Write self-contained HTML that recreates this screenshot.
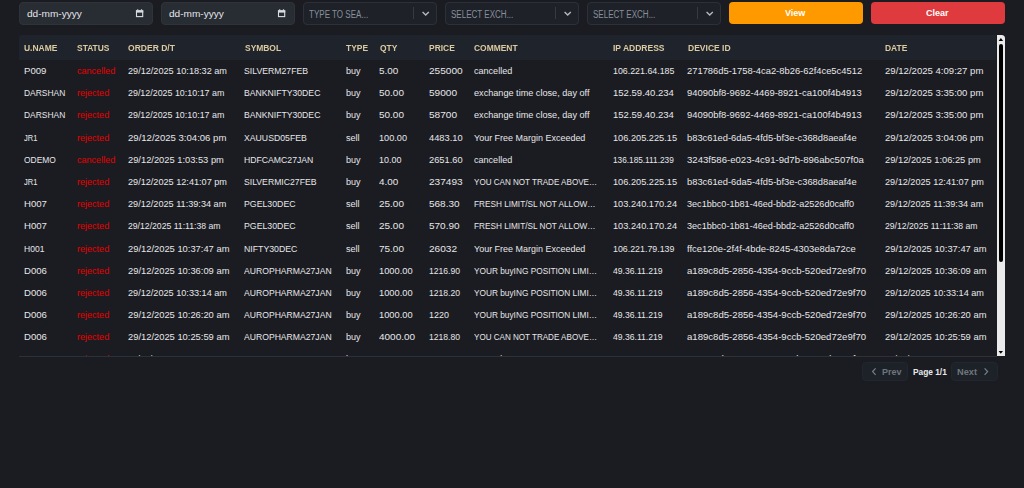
<!DOCTYPE html><html><head><meta charset="utf-8"><style>
html,body{margin:0;padding:0}
body{width:1024px;height:488px;background:#1b1c21;overflow:hidden;position:relative;font-family:"Liberation Sans",sans-serif}
.t{position:absolute;font-size:9.6px;line-height:11px;white-space:nowrap;transform-origin:0 0;color:#e6e7ea}
.ic{position:absolute}
.box{position:absolute;top:2px;height:23.2px;box-sizing:border-box;border-radius:4px}
.date{background:#282c33;border:1px solid #2f333a}
.sel{background:#1e2128;border:1px solid #2b313b}
.dt{color:#e4e6ea;font-size:9.4px}
.ph{color:#87909c;font-size:10px}
.sep{position:absolute;top:7.3px;width:1px;height:12.2px;background:#353b45}
.btn{position:absolute;top:2px;height:21.8px;border-radius:4px}
.bt{color:#fff;font-size:9.4px;font-weight:bold}
.tbl{position:absolute;left:18.5px;top:35px;width:978.5px;height:321.2px;overflow:hidden}
.hdr{position:absolute;left:0;top:0;width:976.6px;height:24.6px;background:#1f232b;border-radius:3px 0 0 0;will-change:transform}
.h{color:#dccaa0;font-weight:bold;font-size:9.8px}
.red{color:#e60000}
.bline{position:absolute;left:18.5px;top:356px;width:978.5px;height:1px;background:#29313c}
.sb{position:absolute;left:997px;top:35px;width:8px;height:321px;background:#ebebeb;border-radius:0 3.5px 0 0}
.thumb{position:absolute;left:1.85px;top:9.3px;width:4.3px;height:217.3px;background:#000;border-radius:2.15px}
.au{position:absolute;left:1.8px;top:3px;width:0;height:0;border-left:2.2px solid transparent;border-right:2.2px solid transparent;border-bottom:3px solid #000}
.ad{position:absolute;left:1.8px;top:316px;width:0;height:0;border-left:2.2px solid transparent;border-right:2.2px solid transparent;border-top:3px solid #000}
.pg{position:absolute;top:361.5px;height:19.5px;box-sizing:border-box;background:#1d2128;border:1px solid #22272f;border-radius:4px}
.pgt{color:#6f757e;font-size:9.3px;font-weight:bold}
.pgw{color:#e8e9ec;font-size:9.3px;font-weight:bold}
</style></head><body><div class="box date" style="left:18.5px;width:134.4px"></div><span class="t dt" style="left:26.50px;top:7.90px;transform:scaleX(1.073);">dd-mm-yyyy</span><svg class="ic" style="left:135.0px;top:8px" width="10" height="11" viewBox="0 0 10 11"><rect x="1.5" y="2.9" width="6.2" height="5.7" fill="none" stroke="#d9dce1" stroke-width="1.1"/><rect x="0.95" y="2.3" width="7.3" height="2.3" fill="#d9dce1"/><rect x="2.1" y="1.3" width="1.2" height="1.2" fill="#d9dce1"/><rect x="5.9" y="1.3" width="1.2" height="1.2" fill="#d9dce1"/></svg><div class="box date" style="left:160.5px;width:134.4px"></div><span class="t dt" style="left:168.50px;top:7.90px;transform:scaleX(1.073);">dd-mm-yyyy</span><svg class="ic" style="left:277.0px;top:8px" width="10" height="11" viewBox="0 0 10 11"><rect x="1.5" y="2.9" width="6.2" height="5.7" fill="none" stroke="#d9dce1" stroke-width="1.1"/><rect x="0.95" y="2.3" width="7.3" height="2.3" fill="#d9dce1"/><rect x="2.1" y="1.3" width="1.2" height="1.2" fill="#d9dce1"/><rect x="5.9" y="1.3" width="1.2" height="1.2" fill="#d9dce1"/></svg><div class="box sel" style="left:302.5px;width:134.4px"></div><span class="t ph" style="left:309.30px;top:9.00px;transform:scaleX(0.804);">TYPE TO SEA...</span><div class="sep" style="left:413.3px"></div><svg class="ic" style="left:420.5px;top:10px" width="10" height="8" viewBox="0 0 10 8"><path d="M1.6 2.0 L4.7 5.1 L7.8 2.0" fill="none" stroke="#b3b8c0" stroke-width="1.4"/></svg><div class="box sel" style="left:444.5px;width:134.4px"></div><span class="t ph" style="left:451.30px;top:9.00px;transform:scaleX(0.803);">SELECT EXCH...</span><div class="sep" style="left:555.3px"></div><svg class="ic" style="left:562.5px;top:10px" width="10" height="8" viewBox="0 0 10 8"><path d="M1.6 2.0 L4.7 5.1 L7.8 2.0" fill="none" stroke="#b3b8c0" stroke-width="1.4"/></svg><div class="box sel" style="left:586.5px;width:134.4px"></div><span class="t ph" style="left:593.30px;top:9.00px;transform:scaleX(0.803);">SELECT EXCH...</span><div class="sep" style="left:697.3px"></div><svg class="ic" style="left:704.5px;top:10px" width="10" height="8" viewBox="0 0 10 8"><path d="M1.6 2.0 L4.7 5.1 L7.8 2.0" fill="none" stroke="#b3b8c0" stroke-width="1.4"/></svg><div class="btn" style="left:728.5px;width:134.4px;background:#ff9900"></div><span class="t bt" style="left:785.30px;top:7.30px;transform:scaleX(0.962);">View</span><div class="btn" style="left:870.5px;width:134.4px;background:#df3b3e"></div><span class="t bt" style="left:926.30px;top:7.30px;transform:scaleX(0.965);">Clear</span><div class="tbl"><div class="hdr"><span class="t h" style="left:5.00px;top:6.70px;transform:scaleX(0.863);">U.NAME</span><span class="t h" style="left:58.00px;top:6.70px;transform:scaleX(0.861);">STATUS</span><span class="t h" style="left:109.00px;top:6.70px;transform:scaleX(0.871);">ORDER D/T</span><span class="t h" style="left:225.50px;top:6.70px;transform:scaleX(0.861);">SYMBOL</span><span class="t h" style="left:327.00px;top:6.70px;transform:scaleX(0.861);">TYPE</span><span class="t h" style="left:360.50px;top:6.70px;transform:scaleX(0.861);">QTY</span><span class="t h" style="left:410.00px;top:6.70px;transform:scaleX(0.861);">PRICE</span><span class="t h" style="left:455.00px;top:6.70px;transform:scaleX(0.861);">COMMENT</span><span class="t h" style="left:594.30px;top:6.70px;transform:scaleX(0.868);">IP ADDRESS</span><span class="t h" style="left:668.50px;top:6.70px;transform:scaleX(0.870);">DEVICE ID</span><span class="t h" style="left:866.00px;top:6.70px;transform:scaleX(0.861);">DATE</span></div><span class="t " style="left:5.00px;top:29.90px;transform:scaleX(1.003);">P009</span><span class="t red" style="left:58.00px;top:29.90px;transform:scaleX(0.943);">cancelled</span><span class="t " style="left:109.00px;top:29.90px;transform:scaleX(0.951);">29/12/2025 10:18:32 am</span><span class="t " style="left:225.50px;top:29.90px;transform:scaleX(0.905);">SILVERM27FEB</span><span class="t " style="left:327.00px;top:29.90px;transform:scaleX(0.943);">buy</span><span class="t " style="left:360.50px;top:29.90px;transform:scaleX(1.033);">5.00</span><span class="t " style="left:410.00px;top:29.90px;transform:scaleX(1.053);">255000</span><span class="t " style="left:455.00px;top:29.90px;transform:scaleX(0.943);">cancelled</span><span class="t " style="left:594.30px;top:29.90px;transform:scaleX(0.921);">106.221.64.185</span><span class="t " style="left:668.50px;top:29.90px;transform:scaleX(0.977);">271786d5-1758-4ca2-8b26-62f4ce5c4512</span><span class="t " style="left:866.00px;top:29.90px;transform:scaleX(0.997);">29/12/2025 4:09:27 pm</span><span class="t " style="left:5.00px;top:52.10px;transform:scaleX(0.879);">DARSHAN</span><span class="t red" style="left:58.00px;top:52.10px;transform:scaleX(0.943);">rejected</span><span class="t " style="left:109.00px;top:52.10px;transform:scaleX(0.926);">29/12/2025 10:10:17 am</span><span class="t " style="left:225.50px;top:52.10px;transform:scaleX(0.901);">BANKNIFTY30DEC</span><span class="t " style="left:327.00px;top:52.10px;transform:scaleX(0.943);">buy</span><span class="t " style="left:360.50px;top:52.10px;transform:scaleX(1.038);">50.00</span><span class="t " style="left:410.00px;top:52.10px;transform:scaleX(1.053);">59000</span><span class="t " style="left:455.00px;top:52.10px;transform:scaleX(0.951);">exchange time close, day off</span><span class="t " style="left:594.30px;top:52.10px;transform:scaleX(0.993);">152.59.40.234</span><span class="t " style="left:668.50px;top:52.10px;transform:scaleX(0.984);">94090bf8-9692-4469-8921-ca100f4b4913</span><span class="t " style="left:866.00px;top:52.10px;transform:scaleX(0.997);">29/12/2025 3:35:00 pm</span><span class="t " style="left:5.00px;top:74.30px;transform:scaleX(0.879);">DARSHAN</span><span class="t red" style="left:58.00px;top:74.30px;transform:scaleX(0.943);">rejected</span><span class="t " style="left:109.00px;top:74.30px;transform:scaleX(0.926);">29/12/2025 10:10:17 am</span><span class="t " style="left:225.50px;top:74.30px;transform:scaleX(0.901);">BANKNIFTY30DEC</span><span class="t " style="left:327.00px;top:74.30px;transform:scaleX(0.943);">buy</span><span class="t " style="left:360.50px;top:74.30px;transform:scaleX(1.038);">50.00</span><span class="t " style="left:410.00px;top:74.30px;transform:scaleX(1.053);">58700</span><span class="t " style="left:455.00px;top:74.30px;transform:scaleX(0.951);">exchange time close, day off</span><span class="t " style="left:594.30px;top:74.30px;transform:scaleX(0.993);">152.59.40.234</span><span class="t " style="left:668.50px;top:74.30px;transform:scaleX(0.984);">94090bf8-9692-4469-8921-ca100f4b4913</span><span class="t " style="left:866.00px;top:74.30px;transform:scaleX(0.997);">29/12/2025 3:35:00 pm</span><span class="t " style="left:5.00px;top:96.50px;transform:scaleX(0.784);">JR1</span><span class="t red" style="left:58.00px;top:96.50px;transform:scaleX(0.943);">rejected</span><span class="t " style="left:109.00px;top:96.50px;transform:scaleX(0.997);">29/12/2025 3:04:06 pm</span><span class="t " style="left:225.50px;top:96.50px;transform:scaleX(0.906);">XAUUSD05FEB</span><span class="t " style="left:327.00px;top:96.50px;transform:scaleX(0.943);">sell</span><span class="t " style="left:360.50px;top:96.50px;transform:scaleX(0.953);">100.00</span><span class="t " style="left:410.00px;top:96.50px;transform:scaleX(0.969);">4483.10</span><span class="t " style="left:455.00px;top:96.50px;transform:scaleX(0.935);">Your Free Margin Exceeded</span><span class="t " style="left:594.30px;top:96.50px;transform:scaleX(0.960);">106.205.225.15</span><span class="t " style="left:668.50px;top:96.50px;transform:scaleX(0.973);">b83c61ed-6da5-4fd5-bf3e-c368d8aeaf4e</span><span class="t " style="left:866.00px;top:96.50px;transform:scaleX(0.997);">29/12/2025 3:04:06 pm</span><span class="t " style="left:5.00px;top:118.70px;transform:scaleX(0.879);">ODEMO</span><span class="t red" style="left:58.00px;top:118.70px;transform:scaleX(0.943);">cancelled</span><span class="t " style="left:109.00px;top:118.70px;transform:scaleX(0.971);">29/12/2025 1:03:53 pm</span><span class="t " style="left:225.50px;top:118.70px;transform:scaleX(0.903);">HDFCAMC27JAN</span><span class="t " style="left:327.00px;top:118.70px;transform:scaleX(0.943);">buy</span><span class="t " style="left:360.50px;top:118.70px;transform:scaleX(0.931);">10.00</span><span class="t " style="left:410.00px;top:118.70px;transform:scaleX(0.969);">2651.60</span><span class="t " style="left:455.00px;top:118.70px;transform:scaleX(0.943);">cancelled</span><span class="t " style="left:594.30px;top:118.70px;transform:scaleX(0.860);">136.185.111.239</span><span class="t " style="left:668.50px;top:118.70px;transform:scaleX(0.999);">3243f586-e023-4c91-9d7b-896abc507f0a</span><span class="t " style="left:866.00px;top:118.70px;transform:scaleX(0.971);">29/12/2025 1:06:25 pm</span><span class="t " style="left:5.00px;top:140.90px;transform:scaleX(0.784);">JR1</span><span class="t red" style="left:58.00px;top:140.90px;transform:scaleX(0.943);">rejected</span><span class="t " style="left:109.00px;top:140.90px;transform:scaleX(0.951);">29/12/2025 12:41:07 pm</span><span class="t " style="left:225.50px;top:140.90px;transform:scaleX(0.902);">SILVERMIC27FEB</span><span class="t " style="left:327.00px;top:140.90px;transform:scaleX(0.943);">buy</span><span class="t " style="left:360.50px;top:140.90px;transform:scaleX(1.033);">4.00</span><span class="t " style="left:410.00px;top:140.90px;transform:scaleX(1.053);">237493</span><span class="t " style="left:455.00px;top:140.90px;transform:scaleX(0.841);">YOU CAN NOT TRADE ABOVE…</span><span class="t " style="left:594.30px;top:140.90px;transform:scaleX(0.960);">106.205.225.15</span><span class="t " style="left:668.50px;top:140.90px;transform:scaleX(0.973);">b83c61ed-6da5-4fd5-bf3e-c368d8aeaf4e</span><span class="t " style="left:866.00px;top:140.90px;transform:scaleX(0.951);">29/12/2025 12:41:07 pm</span><span class="t " style="left:5.00px;top:163.10px;transform:scaleX(1.001);">H007</span><span class="t red" style="left:58.00px;top:163.10px;transform:scaleX(0.943);">rejected</span><span class="t " style="left:109.00px;top:163.10px;transform:scaleX(0.951);">29/12/2025 11:39:34 am</span><span class="t " style="left:225.50px;top:163.10px;transform:scaleX(0.912);">PGEL30DEC</span><span class="t " style="left:327.00px;top:163.10px;transform:scaleX(0.943);">sell</span><span class="t " style="left:360.50px;top:163.10px;transform:scaleX(1.038);">25.00</span><span class="t " style="left:410.00px;top:163.10px;transform:scaleX(1.041);">568.30</span><span class="t " style="left:455.00px;top:163.10px;transform:scaleX(0.857);">FRESH LIMIT/SL NOT ALLOW…</span><span class="t " style="left:594.30px;top:163.10px;transform:scaleX(0.960);">103.240.170.24</span><span class="t " style="left:668.50px;top:163.10px;transform:scaleX(0.947);">3ec1bbc0-1b81-46ed-bbd2-a2526d0caff0</span><span class="t " style="left:866.00px;top:163.10px;transform:scaleX(0.951);">29/12/2025 11:39:34 am</span><span class="t " style="left:5.00px;top:185.30px;transform:scaleX(1.001);">H007</span><span class="t red" style="left:58.00px;top:185.30px;transform:scaleX(0.943);">rejected</span><span class="t " style="left:109.00px;top:185.30px;transform:scaleX(0.901);">29/12/2025 11:11:38 am</span><span class="t " style="left:225.50px;top:185.30px;transform:scaleX(0.912);">PGEL30DEC</span><span class="t " style="left:327.00px;top:185.30px;transform:scaleX(0.943);">sell</span><span class="t " style="left:360.50px;top:185.30px;transform:scaleX(1.038);">25.00</span><span class="t " style="left:410.00px;top:185.30px;transform:scaleX(1.041);">570.90</span><span class="t " style="left:455.00px;top:185.30px;transform:scaleX(0.857);">FRESH LIMIT/SL NOT ALLOW…</span><span class="t " style="left:594.30px;top:185.30px;transform:scaleX(0.960);">103.240.170.24</span><span class="t " style="left:668.50px;top:185.30px;transform:scaleX(0.947);">3ec1bbc0-1b81-46ed-bbd2-a2526d0caff0</span><span class="t " style="left:866.00px;top:185.30px;transform:scaleX(0.901);">29/12/2025 11:11:38 am</span><span class="t " style="left:5.00px;top:207.50px;transform:scaleX(0.889);">H001</span><span class="t red" style="left:58.00px;top:207.50px;transform:scaleX(0.943);">rejected</span><span class="t " style="left:109.00px;top:207.50px;transform:scaleX(0.975);">29/12/2025 10:37:47 am</span><span class="t " style="left:225.50px;top:207.50px;transform:scaleX(0.911);">NIFTY30DEC</span><span class="t " style="left:327.00px;top:207.50px;transform:scaleX(0.943);">sell</span><span class="t " style="left:360.50px;top:207.50px;transform:scaleX(1.038);">75.00</span><span class="t " style="left:410.00px;top:207.50px;transform:scaleX(1.053);">26032</span><span class="t " style="left:455.00px;top:207.50px;transform:scaleX(0.935);">Your Free Margin Exceeded</span><span class="t " style="left:594.30px;top:207.50px;transform:scaleX(0.921);">106.221.79.139</span><span class="t " style="left:668.50px;top:207.50px;transform:scaleX(0.984);">ffce120e-2f4f-4bde-8245-4303e8da72ce</span><span class="t " style="left:866.00px;top:207.50px;transform:scaleX(0.975);">29/12/2025 10:37:47 am</span><span class="t " style="left:5.00px;top:229.70px;transform:scaleX(1.001);">D006</span><span class="t red" style="left:58.00px;top:229.70px;transform:scaleX(0.943);">rejected</span><span class="t " style="left:109.00px;top:229.70px;transform:scaleX(0.975);">29/12/2025 10:36:09 am</span><span class="t " style="left:225.50px;top:229.70px;transform:scaleX(0.898);">AUROPHARMA27JAN</span><span class="t " style="left:327.00px;top:229.70px;transform:scaleX(0.943);">buy</span><span class="t " style="left:360.50px;top:229.70px;transform:scaleX(0.969);">1000.00</span><span class="t " style="left:410.00px;top:229.70px;transform:scaleX(0.895);">1216.90</span><span class="t " style="left:455.00px;top:229.70px;transform:scaleX(0.864);">YOUR buyING POSITION LIMI…</span><span class="t " style="left:594.30px;top:229.70px;transform:scaleX(0.896);">49.36.11.219</span><span class="t " style="left:668.50px;top:229.70px;transform:scaleX(0.999);">a189c8d5-2856-4354-9ccb-520ed72e9f70</span><span class="t " style="left:866.00px;top:229.70px;transform:scaleX(0.975);">29/12/2025 10:36:09 am</span><span class="t " style="left:5.00px;top:251.90px;transform:scaleX(1.001);">D006</span><span class="t red" style="left:58.00px;top:251.90px;transform:scaleX(0.943);">rejected</span><span class="t " style="left:109.00px;top:251.90px;transform:scaleX(0.951);">29/12/2025 10:33:14 am</span><span class="t " style="left:225.50px;top:251.90px;transform:scaleX(0.898);">AUROPHARMA27JAN</span><span class="t " style="left:327.00px;top:251.90px;transform:scaleX(0.943);">buy</span><span class="t " style="left:360.50px;top:251.90px;transform:scaleX(0.969);">1000.00</span><span class="t " style="left:410.00px;top:251.90px;transform:scaleX(0.895);">1218.20</span><span class="t " style="left:455.00px;top:251.90px;transform:scaleX(0.864);">YOUR buyING POSITION LIMI…</span><span class="t " style="left:594.30px;top:251.90px;transform:scaleX(0.896);">49.36.11.219</span><span class="t " style="left:668.50px;top:251.90px;transform:scaleX(0.999);">a189c8d5-2856-4354-9ccb-520ed72e9f70</span><span class="t " style="left:866.00px;top:251.90px;transform:scaleX(0.951);">29/12/2025 10:33:14 am</span><span class="t " style="left:5.00px;top:274.10px;transform:scaleX(1.001);">D006</span><span class="t red" style="left:58.00px;top:274.10px;transform:scaleX(0.943);">rejected</span><span class="t " style="left:109.00px;top:274.10px;transform:scaleX(0.975);">29/12/2025 10:26:20 am</span><span class="t " style="left:225.50px;top:274.10px;transform:scaleX(0.898);">AUROPHARMA27JAN</span><span class="t " style="left:327.00px;top:274.10px;transform:scaleX(0.943);">buy</span><span class="t " style="left:360.50px;top:274.10px;transform:scaleX(0.969);">1000.00</span><span class="t " style="left:410.00px;top:274.10px;transform:scaleX(0.933);">1220</span><span class="t " style="left:455.00px;top:274.10px;transform:scaleX(0.864);">YOUR buyING POSITION LIMI…</span><span class="t " style="left:594.30px;top:274.10px;transform:scaleX(0.896);">49.36.11.219</span><span class="t " style="left:668.50px;top:274.10px;transform:scaleX(0.999);">a189c8d5-2856-4354-9ccb-520ed72e9f70</span><span class="t " style="left:866.00px;top:274.10px;transform:scaleX(0.975);">29/12/2025 10:26:20 am</span><span class="t " style="left:5.00px;top:296.30px;transform:scaleX(1.001);">D006</span><span class="t red" style="left:58.00px;top:296.30px;transform:scaleX(0.943);">rejected</span><span class="t " style="left:109.00px;top:296.30px;transform:scaleX(0.975);">29/12/2025 10:25:59 am</span><span class="t " style="left:225.50px;top:296.30px;transform:scaleX(0.898);">AUROPHARMA27JAN</span><span class="t " style="left:327.00px;top:296.30px;transform:scaleX(0.943);">buy</span><span class="t " style="left:360.50px;top:296.30px;transform:scaleX(1.042);">4000.00</span><span class="t " style="left:410.00px;top:296.30px;transform:scaleX(0.895);">1218.80</span><span class="t " style="left:455.00px;top:296.30px;transform:scaleX(0.841);">YOU CAN NOT TRADE ABOVE…</span><span class="t " style="left:594.30px;top:296.30px;transform:scaleX(0.896);">49.36.11.219</span><span class="t " style="left:668.50px;top:296.30px;transform:scaleX(0.999);">a189c8d5-2856-4354-9ccb-520ed72e9f70</span><span class="t " style="left:866.00px;top:296.30px;transform:scaleX(0.975);">29/12/2025 10:25:59 am</span><span class="t " style="left:5.00px;top:318.30px;transform:scaleX(1.001);">D006</span><span class="t red" style="left:58.00px;top:318.30px;transform:scaleX(0.943);">rejected</span><span class="t " style="left:109.00px;top:318.30px;transform:scaleX(0.901);">29/12/2025 10:21:11 am</span><span class="t " style="left:225.50px;top:318.30px;transform:scaleX(0.898);">AUROPHARMA27JAN</span><span class="t " style="left:327.00px;top:318.30px;transform:scaleX(0.943);">buy</span><span class="t " style="left:360.50px;top:318.30px;transform:scaleX(0.969);">1000.00</span><span class="t " style="left:410.00px;top:318.30px;transform:scaleX(0.895);">1218.40</span><span class="t " style="left:455.00px;top:318.30px;transform:scaleX(0.864);">YOUR buyING POSITION LIMI…</span><span class="t " style="left:594.30px;top:318.30px;transform:scaleX(0.896);">49.36.11.219</span><span class="t " style="left:668.50px;top:318.30px;transform:scaleX(0.999);">a189c8d5-2856-4354-9ccb-520ed72e9f70</span><span class="t " style="left:866.00px;top:318.30px;transform:scaleX(0.901);">29/12/2025 10:21:11 am</span></div><div class="bline"></div><div class="sb"><svg style="position:absolute;left:0;top:0" width="8" height="321" viewBox="0 0 8 321"><path d="M3.85 2.9 L6.1 5.9 L1.6 5.9 Z" fill="#000"/><path d="M1.6 315.9 L6.0 315.9 L3.8 318.8 Z" fill="#000"/></svg><div class="thumb"></div></div><div class="pg" style="left:862.2px;width:45.8px"></div><svg class="ic" style="left:870px;top:366px" width="8" height="10" viewBox="0 0 8 10"><path d="M5.6 2.4 L2.6 5.6 L5.6 8.8" fill="none" stroke="#7b818a" stroke-width="1.2"/></svg><span class="t pgt" style="left:882.30px;top:366.90px;transform:scaleX(0.967);">Prev</span><span class="t pgw" style="left:912.60px;top:366.90px;transform:scaleX(0.896);">Page 1/1</span><div class="pg" style="left:950.5px;width:47.1px"></div><span class="t pgt" style="left:957.30px;top:366.90px;transform:scaleX(0.997);">Next</span><svg class="ic" style="left:982px;top:366px" width="8" height="10" viewBox="0 0 8 10"><path d="M2.6 2.4 L5.6 5.6 L2.6 8.8" fill="none" stroke="#7b818a" stroke-width="1.2"/></svg></body></html>
